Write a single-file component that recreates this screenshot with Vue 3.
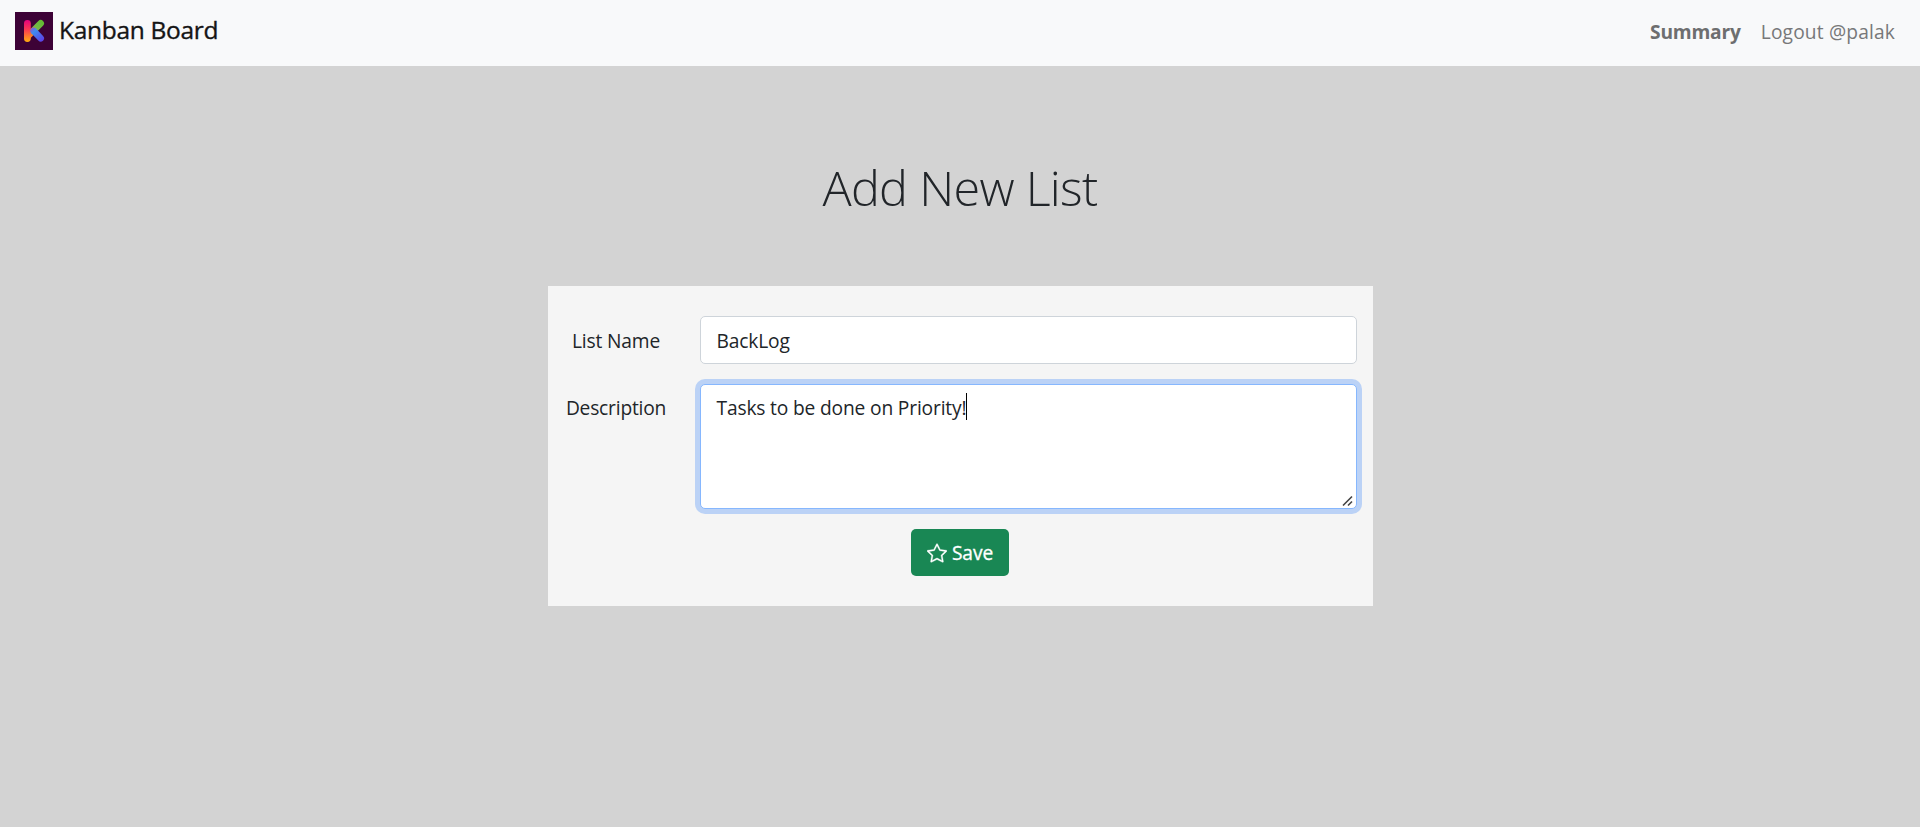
<script setup>
import { ref } from 'vue'
const listName = ref('BackLog')
const description = ref('Tasks to be done on Priority!')
</script>

<template>
  <div class="page">
    <nav class="navbar">
      <a class="brand">
        <svg class="logo" viewBox="0 0 38 38">
          <defs>
            <linearGradient id="stem" x1="0" y1="0" x2="0" y2="1"><stop offset="0" stop-color="#e6007e" /><stop offset=".45" stop-color="#fb3b50" /><stop offset="1" stop-color="#ffae10" /></linearGradient>
            <linearGradient id="arm" gradientUnits="userSpaceOnUse" x1="27" y1="9" x2="12" y2="24"><stop offset="0" stop-color="#62ba32" /><stop offset=".4" stop-color="#74b848" /><stop offset=".75" stop-color="#f07a30" /><stop offset="1" stop-color="#ff8a1c" /></linearGradient>
            <linearGradient id="leg" gradientUnits="userSpaceOnUse" x1="14" y1="14" x2="27" y2="28"><stop offset="0" stop-color="#c42cb4" /><stop offset=".4" stop-color="#3f8df0" /><stop offset="1" stop-color="#5b45e8" /></linearGradient>
          </defs>
          <rect width="38" height="38" fill="#3d0236" />
          <path d="M25.7 11.3 12.5 24.5" stroke="url(#arm)" stroke-width="6.6" stroke-linecap="round" />
          <rect x="9" y="8" width="6.8" height="22" rx="3.4" fill="url(#stem)" />
          <path d="M18.6 18.9 25.7 26.3" stroke="url(#leg)" stroke-width="6.6" stroke-linecap="round" />
        </svg>
        <span class="brand-name">Kanban Board</span>
      </a>
      <div class="links">
        <a class="summary">Summary</a>
        <a class="logout">Logout @palak</a>
      </div>
    </nav>
    <main>
      <h1>Add New List</h1>
      <form class="card" @submit.prevent>
        <div class="row">
          <label class="name-label" for="list-name">List Name</label>
          <input id="list-name" v-model="listName" class="control" type="text" />
        </div>
        <div class="row">
          <label class="desc-label" for="description">Description</label>
          <div id="description" class="area">
            <span class="area-text">{{ description }}</span><span class="caret"></span>
            <svg class="grip" viewBox="0 0 12 12"><path d="M1 10.5 10 1.5M6 10.5 10 6.5" /></svg>
          </div>
        </div>
        <button class="save" type="submit">
          <svg class="star" viewBox="0 0 16 16"><path d="M2.866 14.85c-.078.444.36.791.746.593l4.39-2.256 4.389 2.256c.386.198.824-.149.746-.592l-.83-4.73 3.522-3.356c.33-.314.16-.888-.282-.95l-4.898-.696L8.465.792a.513.513 0 0 0-.927 0L5.354 5.12l-4.898.696c-.441.062-.612.636-.283.95l3.523 3.356-.83 4.73zm4.905-2.767-3.686 1.894.694-3.957a.565.565 0 0 0-.163-.505L1.71 6.745l4.052-.576a.525.525 0 0 0 .393-.288L8 2.223l1.847 3.658a.525.525 0 0 0 .393.288l4.052.575-2.906 2.77a.565.565 0 0 0-.163.506l.694 3.957-3.686-1.894a.503.503 0 0 0-.461 0z" /></svg>
          <span>Save</span>
        </button>
      </form>
    </main>
  </div>
</template>

<style scoped>
.page { min-height: 827px; box-sizing: border-box; background: #d3d3d3; color: #212529; font: 400 19.2px/30px "Open Sans", "Noto Sans", sans-serif; letter-spacing: -0.16px; }
.navbar { height: 66px; box-sizing: border-box; padding: 0 25px 0 15px; display: flex; justify-content: space-between; background: #f8f9fa; }
.brand { display: flex; align-items: flex-start; padding-top: 12px; }
.logo { width: 38px; height: 38px; margin-right: 6px; fill: none; }
.brand-name { font-size: 24.5px; font-weight: 500; line-height: 35px; letter-spacing: -0.3px; color: #151515; -webkit-text-stroke: 0.35px #151515; }
.links { display: flex; gap: 20px; padding-top: 17px; color: #777879; }
.logout { letter-spacing: 0.15px; }
.summary { font-weight: 700; letter-spacing: -0.2px; color: #6d6e6f; }
main { display: flex; flex-direction: column; align-items: center; padding-top: 91px; }
h1 { margin: 0 0 69px; font-size: 48.5px; line-height: 60px; font-weight: 300; letter-spacing: -0.7px; }
.card { width: 825px; height: 320px; box-sizing: border-box; padding: 30px 16px 0 0; background: #f5f5f5; display: flex; flex-direction: column; align-items: center; gap: 20px; }
.row { display: grid; grid-template-columns: 136px 657px; column-gap: 16px; align-self: stretch; }
label { text-align: center; padding-top: 10px; }
.desc-label { padding: 9px 0 0 1px; letter-spacing: -0.2px; }
.name-label { padding-left: 1px; }
.control { width: 657px; height: 48px; box-sizing: border-box; border: 1px solid #ced4da; border-radius: 5px; padding: 0 16px; font: inherit; letter-spacing: inherit; color: inherit; background: #fff; outline: none; }
.area { position: relative; height: 125px; box-sizing: border-box; border: 1px solid #86b7fe; border-radius: 5px; box-shadow: 0 0 0 5px #bbd2f6; background: #fff; padding: 8px 16px; display: flex; align-items: flex-start; }
.caret { width: 1px; height: 27px; background: #000; }
.grip { position: absolute; right: 2px; bottom: 1px; width: 12px; height: 12px; fill: none; stroke: #444; stroke-width: 1.6; }
.save { width: 98px; height: 47px; margin-left: 16px; border: 0; border-radius: 5px; background: #198754; color: #fff; font: inherit; letter-spacing: -0.1px; -webkit-text-stroke: 0.3px #fff; display: flex; align-items: center; justify-content: center; gap: 5px; padding: 0; }
.star { width: 20px; height: 20px; fill: #fff; stroke: #fff; stroke-width: 0.25; }
</style>

<style>
body { margin: 0; background: #d3d3d3; }
</style>
